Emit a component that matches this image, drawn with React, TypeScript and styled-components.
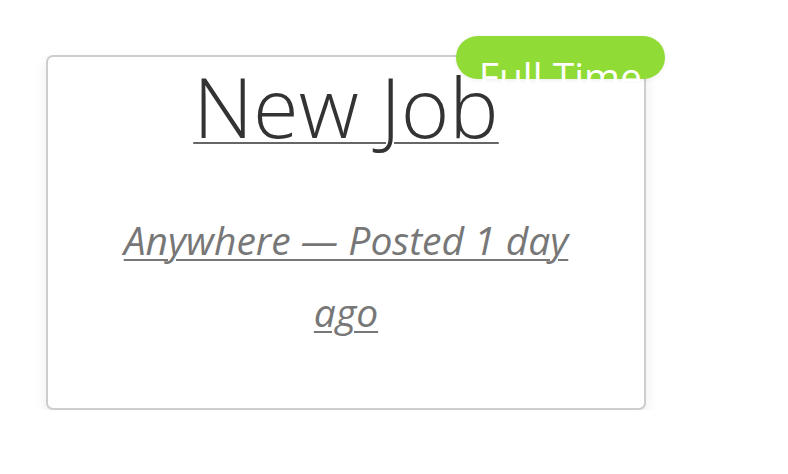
import styled, { createGlobalStyle } from "styled-components";

const GlobalStyle = createGlobalStyle`
  html, body {
    margin: 0;
    background: #fff;
    font-family: "Open Sans", "Liberation Sans", sans-serif;
  }
`;

const Page = styled.div`
  padding: 55px 0 0 46px;
`;

const Card = styled.div`
  position: relative;
  box-sizing: border-box;
  width: 600px;
  padding: 9px 50px 60px;
  border: 2px solid #cdcdcd;
  border-radius: 7px;
  background: #fff;
  box-shadow: 0 6px 14px rgba(0, 0, 0, 0.08);
  text-align: center;
`;

const Badge = styled.div`
  position: absolute;
  top: -21px;
  right: -21px;
  box-sizing: border-box;
  height: 43px;
  padding: 4px 23px 0;
  border-radius: 22px;
  background: #91db36;
  box-shadow: 0 1px 4px rgba(0, 0, 0, 0.08);
  color: #fff;
  font-size: 39px;
  line-height: 72px;
  white-space: nowrap;
`;

const Title = styled.a`
  display: inline-block;
  font-size: 83px;
  font-weight: 300;
  line-height: 80px;
  color: #333;
  text-decoration: underline;
  text-decoration-color: #666;
  text-decoration-thickness: 2px;
  text-underline-offset: 4px;
`;

const Meta = styled.p`
  margin: 58px 0 0;
  font-size: 39px;
  font-style: italic;
  line-height: 72px;
`;

const MetaLink = styled.a`
  color: #777;
  text-decoration: underline;
  text-decoration-thickness: 2px;
  text-underline-offset: 4px;
`;

export default function App() {
  return (
    <>
      <GlobalStyle />
      <Page>
        <Card>
          <Badge>Full Time</Badge>
          <Title>New Job</Title>
          <Meta>
            <MetaLink>Anywhere — Posted 1 day ago</MetaLink>
          </Meta>
        </Card>
      </Page>
    </>
  );
}
